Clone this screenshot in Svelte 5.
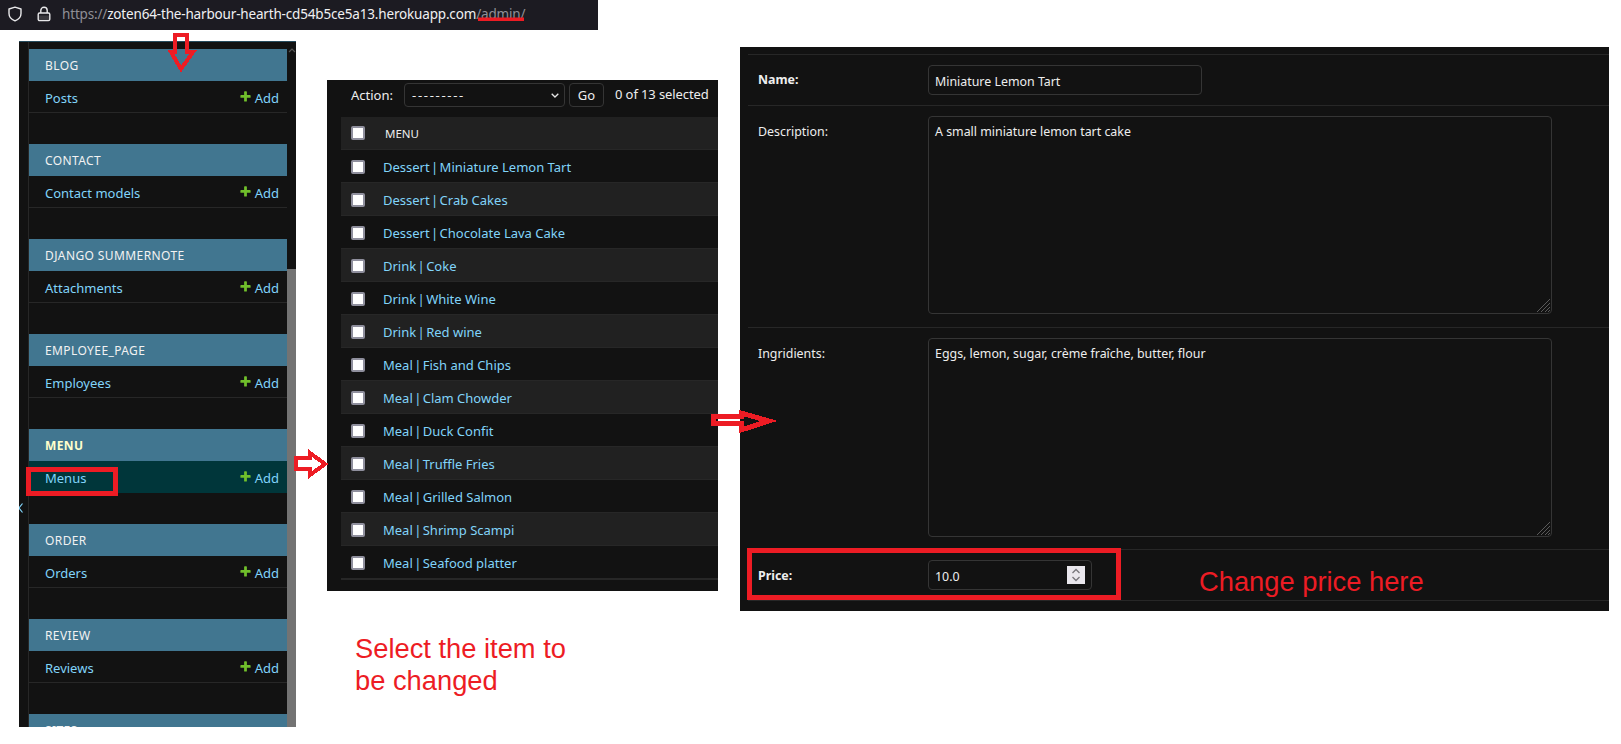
<script>
	const modules = [
		{ name: 'Blog', item: 'Posts' },
		{ name: 'Contact', item: 'Contact models' },
		{ name: 'Django Summernote', item: 'Attachments' },
		{ name: 'Employee_Page', item: 'Employees' },
		{ name: 'Menu', item: 'Menus', current: true },
		{ name: 'Order', item: 'Orders' },
		{ name: 'Review', item: 'Reviews' },
		{ name: 'Sites' }
	];

	const menuItems = [
		['Dessert', 'Miniature Lemon Tart'],
		['Dessert', 'Crab Cakes'],
		['Dessert', 'Chocolate Lava Cake'],
		['Drink', 'Coke'],
		['Drink', 'White Wine'],
		['Drink', 'Red wine'],
		['Meal', 'Fish and Chips'],
		['Meal', 'Clam Chowder'],
		['Meal', 'Duck Confit'],
		['Meal', 'Truffle Fries'],
		['Meal', 'Grilled Salmon'],
		['Meal', 'Shrimp Scampi'],
		['Meal', 'Seafood platter']
	];
</script>

<div class="canvas">
	<header class="urlbar">
		<svg class="shield" viewBox="0 0 16 16" width="16" height="16" aria-hidden="true">
			<path d="M8 1.2 L14 3 V7.5 C14 11.2 11.4 13.6 8 14.9 C4.6 13.6 2 11.2 2 7.5 V3 Z" fill="none" stroke="#e8e8ea" stroke-width="1.4" stroke-linejoin="round" />
		</svg>
		<svg class="lock" viewBox="0 0 14 16" width="14" height="16" aria-hidden="true">
			<path d="M3.8 7 V4.4 C3.8 2.6 5.2 1.3 7 1.3 C8.8 1.3 10.2 2.6 10.2 4.4 V7" fill="none" stroke="#e8e8ea" stroke-width="1.4" />
			<rect x="1.2" y="7" width="11.6" height="7.6" rx="1.4" fill="none" stroke="#e8e8ea" stroke-width="1.4" />
			<rect x="1.2" y="9.5" width="11.6" height="5" fill="#e8e8ea" opacity="0.15" />
		</svg>
		<span class="url"><span class="dim">https://</span>zoten64-the-harbour-hearth-cd54b5ce5a13.herokuapp.com<span class="dim">/admin/</span></span>
	</header>

	<nav class="sidebar">
		<div class="strip">
			<svg class="collapse" viewBox="0 0 4 10" width="4" height="10" aria-hidden="true">
				<path d="M3.5 0.5 L0 5 L3.5 9.5" fill="none" stroke="#81d4fa" stroke-width="1.2" />
			</svg>
		</div>
		<div class="modules">
			{#each modules as mod}
				<section class="module">
					<h2 class:current={mod.current}>{mod.name}</h2>
					{#if mod.item}
						<div class="model" class:selected={mod.current}>
							<a href="#top">{mod.item}</a>
							<span class="add">
								<svg viewBox="0 0 1792 1792" width="13" height="13" aria-hidden="true">
									<path fill="#70bf2b" d="M1600 796v192q0 40-28 68t-68 28h-416v416q0 40-28 68t-68 28h-192q-40 0-68-28t-28-68v-416h-416q-40 0-68-28t-28-68v-192q0-40 28-68t68-28h416v-416q0-40 28-68t68-28h192q40 0 68 28t28 68v416h416q40 0 68 28t28 68z" />
								</svg>
								Add
							</span>
						</div>
					{/if}
				</section>
			{/each}
		</div>
		<div class="scrollbar">
			<svg class="scroll-up" viewBox="0 0 8 5" width="8" height="5" aria-hidden="true">
				<path d="M1 4 L4 1 L7 4" fill="none" stroke="#555" stroke-width="1.2" />
			</svg>
			<div class="thumb"></div>
		</div>
	</nav>

	<section class="changelist">
		<div class="actions">
			<span class="action-label">Action:</span>
			<div class="select">
				<span class="dashes">---------</span>
				<svg viewBox="0 0 8 5" width="8" height="5" aria-hidden="true">
					<path d="M0.7 0.7 L4 4 L7.3 0.7" fill="none" stroke="#e6e6e6" stroke-width="1.3" />
				</svg>
			</div>
			<button type="button">Go</button>
			<span class="counter">0 of 13 selected</span>
		</div>
		<div class="table">
			<div class="row head">
				<input type="checkbox" />
				<span>Menu</span>
			</div>
			{#each menuItems as [kind, title], i}
				<div class="row" class:alt={i % 2 === 1}>
					<input type="checkbox" />
					<a href="#top">{kind} <span class="sep">|</span> {title}</a>
				</div>
			{/each}
		</div>
	</section>

	<section class="form">
		<div class="field">
			<label class="required" for="name">Name:</label>
			<input id="name" class="text name" type="text" value="Miniature Lemon Tart" />
		</div>
		<div class="field tall">
			<label for="description">Description:</label>
			<div class="area">
				<textarea id="description">A small miniature lemon tart cake</textarea>
				<svg class="grip" viewBox="0 0 15 15" width="15" height="15" aria-hidden="true">
					<path d="M1 14 L14 1 M5 14 L14 5 M9 14 L14 9 M12 14 L14 12" stroke="#5a5a5a" fill="none" />
				</svg>
			</div>
		</div>
		<div class="field tall second">
			<label for="ingredients">Ingridients:</label>
			<div class="area">
				<textarea id="ingredients">Eggs, lemon, sugar, crème fraîche, butter, flour</textarea>
				<svg class="grip" viewBox="0 0 15 15" width="15" height="15" aria-hidden="true">
					<path d="M1 14 L14 1 M5 14 L14 5 M9 14 L14 9 M12 14 L14 12" stroke="#5a5a5a" fill="none" />
				</svg>
			</div>
		</div>
		<div class="field">
			<label class="required" for="price">Price:</label>
			<div class="price">
				<input id="price" class="text" type="text" value="10.0" />
				<span class="spinner">
					<svg viewBox="0 0 10 16" width="10" height="16" aria-hidden="true">
						<path d="M1.5 6 L5 2.5 L8.5 6 M1.5 10 L5 13.5 L8.5 10" fill="none" stroke="#77767b" stroke-width="1.3" />
					</svg>
				</span>
			</div>
		</div>
	</section>

	<svg class="marks" viewBox="0 0 1621 744" width="1621" height="744" aria-hidden="true">
		<rect x="478" y="17.5" width="46" height="3.5" fill="#ed1c24" />
		<polygon points="175,35 187,35 187,52 193,52 181,69 171,52 175,52" />
		<polygon points="296,458 310,458 310,453 325,464 310,475 310,469 296,469" />
		<polygon class="thin" points="713,416.5 741,416.5 741,413 769,421 741,430 741,423.5 713,423.5" />
		<rect x="28.5" y="469.5" width="87" height="24" />
		<rect x="749.5" y="550.5" width="369" height="47" />
	</svg>

	<p class="note change">Change price here</p>
	<p class="note select-note">Select the item to<br />be changed</p>
</div>

<style>
	:global(body) {
		background: #fff;
	}

	.canvas {
		position: relative;
		width: 1621px;
		height: 744px;
		overflow: hidden;
		font-family: "Noto Sans", "Open Sans", sans-serif;
		font-size: 13px;
		color: #eee;
	}

	/* browser address bar, cut out of the first screenshot */
	.urlbar {
		position: absolute;
		left: 0;
		top: 0;
		width: 598px;
		height: 30px;
		background: #1c1b22;
		display: flex;
		align-items: center;
		padding-bottom: 3px;
		box-sizing: border-box;
	}

	.shield {
		margin-left: 7px;
	}

	.lock {
		margin-left: 14px;
	}

	.url {
		margin-left: 11px;
		font-size: 13.5px;
		letter-spacing: -0.17px;
		color: #f0f0f2;
		white-space: nowrap;
	}

	.dim {
		color: #8f8f96;
	}

	/* admin sidebar */
	.sidebar {
		position: absolute;
		left: 19px;
		top: 41px;
		width: 277px;
		height: 686px;
		display: flex;
		background: #121212;
		border-top: 1px solid #264b5d;
		box-sizing: border-box;
		overflow: hidden;
	}

	.strip {
		position: relative;
		width: 10px;
		flex: none;
		border-right: 1px solid #272727;
		box-sizing: border-box;
	}

	.collapse {
		position: absolute;
		left: 0;
		top: 461px;
	}

	.modules {
		width: 258px;
		flex: none;
		padding-top: 7px;
	}

	.module {
		margin-bottom: 31px;
	}

	h2 {
		margin: 0;
		height: 32px;
		line-height: 33px;
		padding: 0 16px;
		background: #417690;
		font-size: 12px;
		font-weight: 400;
		letter-spacing: 0.4px;
		text-transform: uppercase;
		color: #f2f2f2;
	}

	h2.current {
		font-weight: 700;
		color: #ffffcc;
	}

	.model {
		height: 32px;
		display: flex;
		align-items: center;
		justify-content: space-between;
		padding: 2px 8px 0 16px;
		border-bottom: 1px solid #272727;
		box-sizing: border-box;
	}

	.model.selected {
		background: #00363a;
		border-bottom-color: #00363a;
	}

	a {
		color: #81d4fa;
		text-decoration: none;
	}

	.add {
		display: flex;
		align-items: center;
		gap: 3px;
		color: #81d4fa;
	}

	.add svg {
		margin-top: -3px;
	}

	.scrollbar {
		position: relative;
		flex: 1;
	}

	.scroll-up {
		position: absolute;
		left: 1px;
		top: 6px;
	}

	.thumb {
		margin-top: 227px;
		height: 460px;
		background: #737373;
	}

	/* change list */
	.changelist {
		position: absolute;
		left: 327px;
		top: 80px;
		width: 391px;
		height: 511px;
		background: #121212;
	}

	.actions {
		height: 37px;
		display: flex;
		align-items: flex-start;
		padding: 3px 0 0 24px;
		box-sizing: border-box;
	}

	.action-label {
		width: 53px;
		line-height: 24px;
		font-size: 13px;
	}

	.select {
		width: 161px;
		height: 24px;
		display: flex;
		align-items: center;
		justify-content: space-between;
		padding: 0 5px 0 7px;
		border: 1px solid #353535;
		border-radius: 4px;
		box-sizing: border-box;
	}

	.dashes {
		letter-spacing: 1.7px;
	}

	button {
		width: 35px;
		height: 24px;
		margin-left: 4px;
		padding: 0;
		background: #121212;
		color: #eee;
		border: 1px solid #353535;
		border-radius: 4px;
		font: inherit;
	}

	.counter {
		margin-left: 11px;
		line-height: 22px;
		letter-spacing: -0.1px;
		white-space: nowrap;
	}

	.table {
		margin-left: 14px;
		border-bottom: 1px solid #272727;
	}

	.row {
		height: 33px;
		display: flex;
		align-items: center;
		padding: 2px 0 0 10px;
		box-sizing: border-box;
		border-bottom: 1px solid #272727;
		white-space: nowrap;
	}

	.row.alt {
		background: #212121;
	}

	.row.head {
		padding-top: 0;
		background: #212121;
		font-size: 11.5px;
		text-transform: uppercase;
	}

	.row.head span {
		margin-left: 20px;
	}

	.row a {
		margin-left: 18px;
	}

	.sep {
		margin: 0 -2px;
	}

	input[type='checkbox'] {
		appearance: none;
		width: 14px;
		height: 14px;
		margin: 0;
		flex: none;
		background: #fff;
		border: 2px solid #8f8f9d;
		border-radius: 2px;
		box-sizing: border-box;
	}

	/* edit form */
	.form {
		position: absolute;
		left: 740px;
		top: 47px;
		width: 869px;
		height: 564px;
		padding: 7px 0 0 8px;
		box-sizing: border-box;
		background: #121212;
		font-size: 12.4px;
	}

	.field {
		display: flex;
		align-items: flex-start;
		padding: 10px;
		border-top: 1px solid #272727;
		min-height: 30px;
	}

	.field:last-child {
		border-bottom: 1px solid #272727;
	}

	.field.tall {
		padding-bottom: 13px;
	}

	.field.tall.second {
		padding-bottom: 12px;
	}

	label {
		width: 170px;
		flex: none;
		padding-top: 5px;
		line-height: 22px;
	}

	.field:first-child label {
		padding-top: 4px;
	}

	label.required {
		font-weight: 700;
	}

	.text {
		height: 30px;
		padding: 2px 6px 0;
		background: #121212;
		color: #eee;
		border: 1px solid #353535;
		border-radius: 4px;
		box-sizing: border-box;
		font: inherit;
		outline: none;
	}

	.text.name {
		width: 274px;
	}

	.area {
		position: relative;
		width: 624px;
		height: 198px;
	}

	.second .area {
		height: 199px;
	}

	textarea {
		display: block;
		width: 100%;
		height: 100%;
		padding: 6px 6px 5px;
		background: #121212;
		color: #eee;
		border: 1px solid #353535;
		border-radius: 4px;
		box-sizing: border-box;
		font: inherit;
		resize: none;
		outline: none;
	}

	.grip {
		position: absolute;
		right: 1px;
		bottom: 1px;
	}

	.price {
		position: relative;
		width: 164px;
	}

	.price .text {
		width: 100%;
	}

	.spinner {
		position: absolute;
		right: 7px;
		top: 6px;
		width: 18px;
		height: 18px;
		display: flex;
		align-items: center;
		justify-content: center;
		background: #e9e7ed;
	}

	/* red annotations drawn over the screenshots */
	.marks {
		position: absolute;
		left: 0;
		top: 0;
		pointer-events: none;
	}

	.marks polygon,
	.marks > rect:not(:first-child) {
		fill: none;
		stroke: #ed1c24;
		stroke-width: 5;
		shape-rendering: crispEdges;
	}

	.marks polygon {
		stroke-width: 4;
	}

	.marks polygon.thin {
		stroke-width: 5;
	}

	.note {
		position: absolute;
		margin: 0;
		font-family: "Liberation Sans", Arial, sans-serif;
		font-size: 27.3px;
		line-height: 32px;
		color: #ed1c24;
	}

	.change {
		left: 1199px;
		top: 566px;
	}

	.select-note {
		left: 355px;
		top: 633px;
	}
</style>
